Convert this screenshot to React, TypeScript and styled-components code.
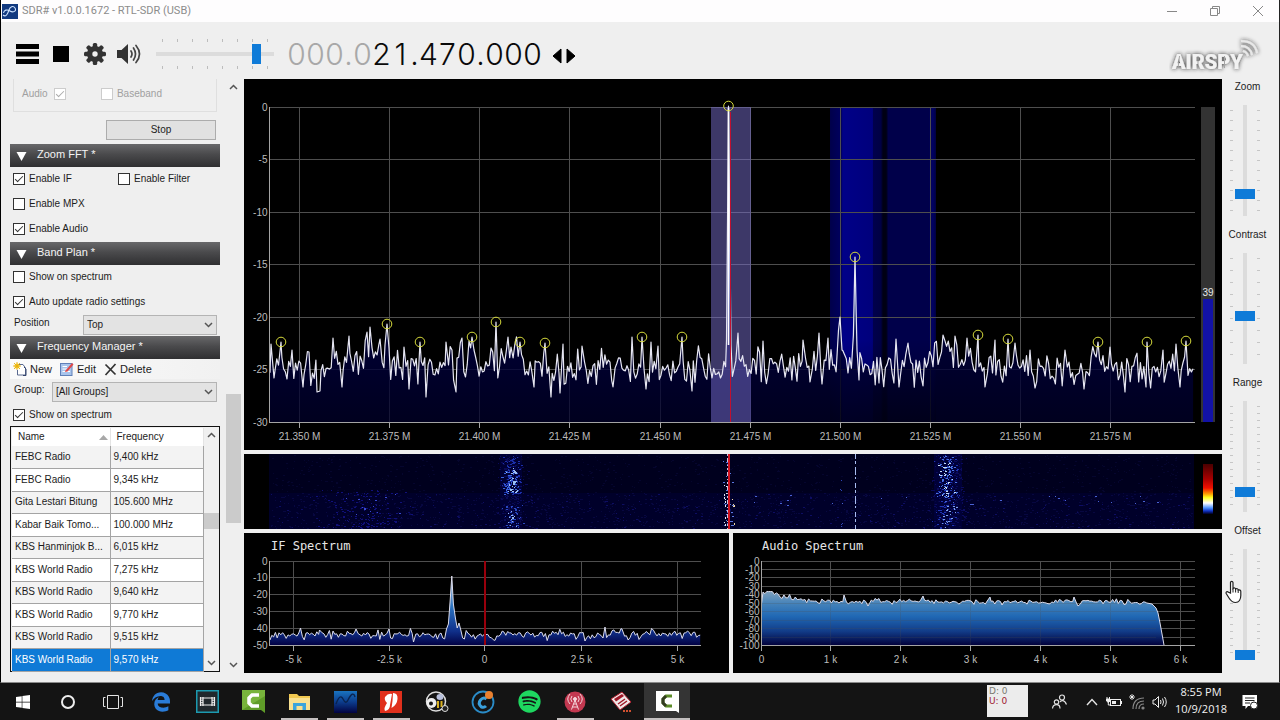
import React from 'react';
import styled, { createGlobalStyle, css } from 'styled-components';
import { FaWindows, FaSpotify, FaEdgeLegacy } from 'react-icons/fa';

const GlobalStyle = createGlobalStyle`
  *, *::before, *::after { box-sizing: border-box; }
  body {
    margin: 0;
    background: #141414;
    color: #1c1c1c;
    font: 10px/12px "Liberation Sans", Arial, sans-serif;
  }
  button, input, select { font: inherit; color: inherit; margin: 0; }
`;

/* ---------- window frame ---------- */

const Desktop = styled.div`
  min-height: 100vh;
  display: flex;
  flex-direction: column;
`;

const AppWindow = styled.main`
  flex: 1;
  display: flex;
  flex-direction: column;
  background: #efefef;
  border-left: 1px solid #000;
  border-right: 1px solid #222;
  border-bottom: 1px solid #8a8a8a;
`;

const TitleBar = styled.header`
  display: flex;
  align-items: center;
  height: 22px;
  padding-left: 1px;
  background: #fefdfe;
`;

const Title = styled.h1`
  flex: 1;
  margin: 0 0 0 4px;
  font: 400 11px/16px Roboto, "Open Sans", sans-serif;
  color: #8c8c8c;
`;

const CaptionButton = styled.button`
  display: grid;
  place-items: center;
  width: 43px;
  height: 20px;
  padding: 0;
  border: 0;
  background: transparent;
  color: #888;
`;

const Toolbar = styled.div`
  display: flex;
  align-items: center;
  height: 57px;
  padding: 6px 16px 0 9px;
`;

const ToolButton = styled.button`
  display: grid;
  place-items: center;
  width: 34px;
  height: 34px;
  padding: 0;
  border: 0;
  background: transparent;
`;

const VolumeSlider = styled.input`
  appearance: none;
  width: 118px;
  height: 30px;
  margin-left: 10px;
  background:
    linear-gradient(#dcdcdc, #dcdcdc) center 13px / 100% 4px no-repeat,
    repeating-linear-gradient(to right, #bdbdbd 0 1px, transparent 1px 15px) 6px 0 / 106px 3px no-repeat,
    repeating-linear-gradient(to right, #bdbdbd 0 1px, transparent 1px 15px) 6px 27px / 106px 3px no-repeat;
  &::-webkit-slider-thumb {
    appearance: none;
    width: 9px;
    height: 20px;
    background: #0f7bd8;
  }
`;

const Frequency = styled.div`
  display: flex;
  margin-left: 13px;
  font: 300 30px/32px Inter, "Open Sans", sans-serif;
  color: #0a0a0a;
`;

const Digit = styled.span<{ $dim?: boolean; $dot?: boolean }>`
  width: ${p => (p.$dot ? 9 : 19)}px;
  text-align: center;
  color: ${p => (p.$dim ? '#a8a8a8' : 'inherit')};
`;

const StepButtons = styled.div`
  display: flex;
  gap: 4px;
  margin-left: 10px;
  padding-top: 4px;
`;

const StepButton = styled.button`
  display: block;
  padding: 0;
  border: 0;
  background: transparent;
  svg { display: block; }
`;

const Brand = styled.svg`
  display: block;
  margin-left: auto;
`;

const Body = styled.div`
  flex: 1;
  display: flex;
  align-items: flex-start;
  padding-bottom: 9px;
`;

/* ---------- left panel ---------- */

const Sidebar = styled.aside`
  display: flex;
  flex: none;
  width: 243px;
  align-self: stretch;
  justify-content: space-between;
  padding: 0 3px 0 9px;
`;

const Panels = styled.div`
  width: 210px;
`;

const RecordGroup = styled.fieldset`
  display: flex;
  align-items: center;
  justify-content: space-between;
  height: 33px;
  margin: 0 3px;
  padding: 0 54px 3px 8px;
  border: 1px solid #dfdfdf;
  border-top: 0;
  color: #a0a0a0;
`;

const StopButton = styled.button`
  display: block;
  width: 110px;
  height: 20px;
  margin: 8px 4px 4px auto;
  padding: 0;
  border: 1px solid #acacac;
  background: #e1e1e1;
`;

const SectionButton = styled.button`
  display: flex;
  align-items: center;
  gap: 10px;
  width: 100%;
  height: 23px;
  padding: 0 6px 4px;
  border: 0;
  background: linear-gradient(#68686a, #4a4a4c 45%, #2f2f31);
  color: #f4f4f4;
  font-size: 11px;
  svg { margin-top: 5px; }
`;

const Checks = styled.div<{ $pad?: number }>`
  display: grid;
  grid-template-columns: 105px 1fr;
  row-gap: 12px;
  padding: 5px 3px ${p => p.$pad ?? 7}px;
`;

const CheckLabel = styled.label<{ $wide?: boolean; $reverse?: boolean }>`
  display: flex;
  flex-direction: ${p => (p.$reverse ? 'row-reverse' : 'row')};
  align-items: center;
  gap: ${p => (p.$reverse ? 6 : 4)}px;
  height: 13px;
  white-space: nowrap;
  ${p => p.$wide && css`grid-column: 1 / -1;`}
`;

const CheckInput = styled.input`
  appearance: none;
  display: grid;
  place-items: center;
  width: 12px;
  height: 12px;
  border: 1px solid #333;
  background: #fff;
  &:checked::after {
    content: "";
    width: 8px;
    height: 4px;
    margin-top: -2px;
    border: solid #333;
    border-width: 0 0 1px 1px;
    transform: rotate(-45deg);
  }
  &:disabled { border-color: #ccc; }
  &:disabled:checked::after { border-color: #aaa; }
`;

const FieldRow = styled.div<{ $label: number }>`
  display: grid;
  grid-template-columns: ${p => p.$label}px 1fr;
  margin-bottom: 1px;
  padding: 0 3px 0 4px;
  line-height: 16px;
`;

const SelectWrap = styled.div`
  position: relative;
  svg {
    position: absolute;
    right: 4px;
    top: 7px;
    pointer-events: none;
  }
`;

const Select = styled.select`
  appearance: none;
  display: block;
  width: 100%;
  height: 20px;
  padding: 0 3px;
  border: 1px solid #b4b4b4;
  border-radius: 0;
  background: #e3e3e3;
`;

const ManagerTools = styled.div`
  display: flex;
  align-items: center;
  gap: 8px;
  height: 20px;
  margin-bottom: 3px;
  padding-left: 3px;
  background: linear-gradient(to right, #fbfbfb, #f1f1f1);
`;

const ManagerTool = styled.button`
  display: flex;
  align-items: center;
  gap: 3px;
  padding: 0;
  border: 0;
  background: transparent;
  font-size: 11px;
`;

const StationList = styled.div`
  display: flex;
  height: 246px;
  border: 1px solid #111;
  background: #f0f0f0;
`;

const StationTable = styled.table`
  width: 192px;
  height: 243px;
  margin: 1px 0 0 1px;
  border-collapse: collapse;
  table-layout: fixed;
  background: #fff;
  th {
    height: 18px;
    padding: 0 6px;
    font-weight: 400;
    text-align: left;
    border-right: 1px solid #e4e4e4;
  }
  th svg { float: right; margin: 4px -4px 0 0; }
  td {
    height: 22px;
    padding: 0 3px;
    overflow: hidden;
    white-space: nowrap;
    text-overflow: ellipsis;
    border-right: 1px solid #a4a4a4;
    border-bottom: 1px solid #a4a4a4;
  }
  tbody tr:nth-child(even) td { height: 23px; }
  tbody tr:nth-child(odd) { background: #f3f3f3; }
`;

const StationRow = styled.tr<{ $selected: boolean }>`
  ${p => p.$selected && css`
    && { background: #0f7ad6; color: #fff; }
  `}
`;

const ScrollTrack = styled.div<{ $width: number }>`
  display: flex;
  flex-direction: column;
  width: ${p => p.$width}px;
  margin-left: auto;
`;

const ScrollArrow = styled.button`
  display: grid;
  place-items: center;
  width: 100%;
  height: 16px;
  padding: 0;
  border: 0;
  background: transparent;
  color: #555;
`;

const ScrollSpace = styled.div<{ $grow: number }>`
  flex: ${p => p.$grow} 1 0;
`;

const ScrollThumb = styled.div<{ $grow: number }>`
  flex: ${p => p.$grow} 1 0;
  background: #cbcbcb;
`;

/* ---------- displays ---------- */

const Displays = styled.section`
  flex: 1;
  min-width: 0;
  display: flex;
  flex-direction: column;
  gap: 4px;
`;

const DisplayPair = styled.div`
  display: grid;
  grid-template-columns: 485fr 489fr;
  gap: 4px;
`;

const Chart = styled.svg`
  display: block;
  width: 100%;
  height: auto;
  background: #000;
  font: 10px "Liberation Sans", Arial, sans-serif;
`;

const ChartTitle = styled.text`
  font: 12px "DejaVu Sans Mono", monospace;
  fill: #e6e6e6;
`;

/* ---------- right sliders ---------- */

const Controls = styled.section`
  flex: none;
  width: 57px;
  display: flex;
  flex-direction: column;
  gap: 11px;
`;

const Control = styled.div`
  position: relative;
  display: flex;
  flex-direction: column;
  align-items: center;
  gap: 10px;
  label { padding-right: 6px; line-height: 16px; }
`;

const VerticalSlider = styled.input<{ $step: number; $ticks: number }>`
  appearance: none;
  writing-mode: vertical-lr;
  direction: rtl;
  width: 30px;
  height: 111px;
  margin-right: 11px;
  background:
    linear-gradient(#dcdcdc, #dcdcdc) center / 4px 100% no-repeat,
    repeating-linear-gradient(to bottom, #c6c6c6 0 1px, transparent 1px ${p => p.$step}px) 0 5px / 3px ${p => p.$step * (p.$ticks - 1) + 1}px no-repeat,
    repeating-linear-gradient(to bottom, #c6c6c6 0 1px, transparent 1px ${p => p.$step}px) 100% 5px / 3px ${p => p.$step * (p.$ticks - 1) + 1}px no-repeat;
  &::-webkit-slider-thumb {
    appearance: none;
    width: 20px;
    height: 10px;
    background: #0f7bd8;
  }
`;

const Pointer = styled.svg`
  position: absolute;
  left: 3px;
  top: 57px;
`;

/* ---------- taskbar ---------- */

const Taskbar = styled.footer`
  display: flex;
  height: 37px;
  background: #141414;
  color: #f2f2f2;
`;

const TaskGroup = styled.nav`
  display: flex;
  & + & { margin-left: 3px; }
`;

const TaskButton = styled.button<{ $width?: number; $open?: boolean; $active?: boolean }>`
  display: grid;
  place-items: center;
  width: ${p => p.$width ?? 46}px;
  height: 37px;
  padding: 0;
  border: 0;
  background: ${p => (p.$active ? '#343434' : 'transparent')};
  ${p => p.$open && css`
    background-image: linear-gradient(#c4c0c0, #c4c0c0);
    background-repeat: no-repeat;
    background-position: bottom;
    background-size: ${p.$active ? '100%' : '37px'} 2px;
  `}
`;

const Tray = styled.div`
  display: flex;
  align-items: center;
  margin-left: auto;
  padding-right: 12px;
`;

const TrafficBox = styled.div`
  width: 41px;
  height: 32px;
  margin-right: 8px;
  padding: 1px 2px;
  background: #ececec;
  font: 9px/10px "DejaVu Sans", sans-serif;
  color: #7a7a70;
  align-self: flex-start;
  margin-top: 2px;
  span { display: block; }
  span + span { color: #a02030; }
`;

const TrayButton = styled.button<{ $width?: number }>`
  display: grid;
  place-items: center;
  width: ${p => p.$width ?? 23}px;
  height: 37px;
  padding: 0;
  border: 0;
  background: transparent;
`;

const Clock = styled.button`
  width: 60px;
  padding: 0 0 3px;
  border: 0;
  background: transparent;
  color: #f2f2f2;
  font: 11px/17px "Open Sans", "Noto Sans", sans-serif;
  white-space: nowrap;
  time { display: block; }
`;

/* ---------- signal data ---------- */

type Point = [number, number];

function random(seed: number) {
  let s = seed;
  return () => {
    s = (s + 0x6d2b79f5) | 0;
    let t = Math.imul(s ^ (s >>> 15), 1 | s);
    t = (t + Math.imul(t ^ (t >>> 7), 61 | t)) ^ t;
    return ((t ^ (t >>> 14)) >>> 0) / 4294967296;
  };
}

function trace(seed: number, x0: number, x1: number, step: number, mean: (x: number) => number, amp: number, keys: Point[]) {
  const r = random(seed);
  const pts: Point[] = [];
  let drift = 0;
  for (let x = x0; x <= x1; x += step) {
    drift = drift * 0.5 + (r() - 0.5) * amp * 0.5;
    pts.push([x, mean(x) + drift + (r() + r() + r() - 1.5) * amp * 0.8]);
  }
  keys.forEach(([kx, ky]) => {
    const i = Math.round((kx - x0) / step);
    if (pts[i]) pts[i] = [kx, ky];
  });
  return pts;
}

const toPath = (pts: Point[]) => 'M' + pts.map(([x, y]) => `${x.toFixed(1)} ${y.toFixed(1)}`).join('L');
const toArea = (pts: Point[], base: number) =>
  `${toPath(pts)}L${pts[pts.length - 1][0].toFixed(1)} ${base}L${pts[0][0]} ${base}Z`;

const bump = (x: number, c: number, w: number, h: number) => h * Math.exp(-(((x - c) / w) ** 2));

const PEAKS: Point[] = [
  [281, 342], [387, 324], [420, 342], [472, 337], [496, 322], [520, 342], [545, 343], [642, 337],
  [682, 337], [728.5, 106], [855, 257], [978, 335], [1008, 339], [1098, 342], [1147, 342], [1186, 341],
];

const RF_KEYS: Point[] = [
  [271, 344], [274, 378], [292, 350], [303, 387], [309, 352], [317, 392], [320, 391], [333, 338], [342, 387], [349, 336],
  [367, 332], [370, 327], [380, 339], [385, 345], [389, 348], [404, 347], [409, 389], [426, 397], [446, 342], [452, 350],
  [456, 392], [462, 338], [469, 341], [474, 350], [491, 348], [508, 337], [511, 347], [534, 387], [551, 397], [560, 393],
  [563, 344], [582, 346], [613, 387], [632, 337], [646, 389], [651, 342], [658, 346], [692, 391], [726.5, 340], [731, 345],
  [738, 333], [763, 341], [803, 340], [810, 382], [819, 333], [822, 384], [828, 338], [838.5, 330], [840, 317], [842, 350],
  [853.4, 335], [857, 350], [859, 380], [879, 383], [896, 339], [899, 387], [908, 343], [923, 386], [943, 335], [955, 336],
  [967, 338], [985, 387], [995, 340], [1015, 343], [1030, 350], [1035, 388], [1065, 350], [1084, 389], [1110, 347],
  [1125, 392], [1146, 387], [1163, 350], [1176, 344], [1180, 387],
];

const RF = trace(
  11, 270, 1194, 1.7,
  x => 369 - bump(x, 372, 22, 14) - bump(x, 513, 9, 18) - bump(x, 948, 18, 16) - bump(x, 830, 110, 5),
  20, [...RF_KEYS, ...PEAKS],
);

const IF = trace(
  5, 270, 701, 1.8, () => 635, 6,
  [[270, 640], [300.5, 628], [319.5, 630], [356, 629], [413.5, 642], [389, 629], [446.5, 629], [448.4, 624], [450.2, 600], [451.8, 576],
   [453.4, 604], [455.4, 618], [457.2, 628], [459, 623], [460.8, 630], [605, 627], [622, 629], [585, 641]],
);

const AUDIO = [
  [761.5, 604] as Point,
  ...trace(21, 763, 1148, 1.9, x => 601 + (x - 763) / 260 + bump(x, 1100, 40, -1) - bump(x, 768, 14, 9) - bump(x, 790, 14, 2), 3,
    [[844, 595], [923, 596], [990, 597], [1074, 597], [1078, 606], [868, 606], [1002, 605]]),
  [1152, 604], [1156, 608], [1158, 613], [1160, 623], [1162, 634], [1164, 645],
] as Point[];

function specks(seed: number, count: number, place: (r: () => number) => Point, len = 1) {
  const r = random(seed);
  let d = '';
  for (let i = 0; i < count; i++) {
    const [x, y] = place(r);
    d += `M${Math.round(x)} ${Math.round(y) + 0.5}h${len + Math.round(r())}`;
  }
  return d;
}

const around = (c: number, w: number, y0: number, y1: number) => (r: () => number): Point =>
  [c + (r() + r() + r() - 1.5) * w, y0 + r() * (y1 - y0)];
const within = (x0: number, x1: number, y0: number, y1: number) => (r: () => number): Point =>
  [x0 + r() * (x1 - x0), y0 + r() * (y1 - y0)];

const SPECKS: [string, string][] = [
  ['#070740', specks(1, 1500, within(270, 1192, 493, 528))],
  ['#05052e', specks(2, 900, within(270, 1192, 455, 493))],
  ['#0d0d62', specks(3, 260, within(270, 1192, 494, 528))],
  ['#10107a', specks(4, 150, around(365, 40, 490, 528))],
  ['#3a4ad0', specks(5, 16, around(365, 44, 494, 514))],
  ['#0a0a58', specks(6, 260, around(511, 13, 455, 528))],
  ['#1c2fa8', specks(7, 100, around(511, 9, 456, 494))],
  ['#3a62dc', specks(8, 60, around(511, 9, 470, 494))],
  ['#9cc0f4', specks(9, 30, around(512, 5, 468, 493))],
  ['#2a48c0', specks(10, 50, around(513, 9, 505, 528))],
  ['#90b4f0', specks(12, 12, around(513, 6, 508, 526))],
  ['#0a0a5c', specks(13, 320, around(949, 15, 455, 528))],
  ['#1f35b4', specks(14, 120, around(947, 12, 455, 528))],
  ['#4a74e4', specks(15, 70, around(946, 9, 456, 498))],
  ['#c4dcf8', specks(16, 32, around(945, 7, 460, 496))],
  ['#7ea2ec', specks(17, 20, around(948, 10, 505, 528))],
  ['#5a78e0', specks(18, 40, around(728, 5, 456, 528))],
  ['#e8e8f8', specks(19, 34, within(724, 726, 480, 528), 0)],
  ['#f2d8a0', specks(20, 18, within(732, 734, 490, 528), 0)],
  ['#4a62d4', specks(23, 26, within(750, 1180, 494, 505))],
  ['#3046b8', specks(24, 10, within(840, 842, 458, 528), 0)],
];

/* ---------- chart parts ---------- */

interface AxisProps {
  left: number;
  right: number;
  top: number;
  bottom: number;
  xs: [number, string][];
  ys: [number, string][];
}

function Grid({ left, right, top, bottom, xs, ys }: AxisProps) {
  return (
    <g shapeRendering="crispEdges" stroke="#4e4e4e">
      {ys.map(([y]) => <line key={y} x1={left} x2={right} y1={y} y2={y} />)}
      {xs.map(([x]) => <line key={x} x1={x} x2={x} y1={top} y2={bottom} />)}
    </g>
  );
}

function Axes({ left, right, top, bottom, xs, ys }: AxisProps) {
  return (
    <>
      <g shapeRendering="crispEdges" stroke="#a4a4a4">
        <path d={`M${left} ${top}V${bottom}H${right}`} fill="none" />
        {xs.map(([x]) => <line key={x} x1={x} x2={x} y1={bottom} y2={bottom + 5} />)}
      </g>
      <g fill="#bcbcbc">
        {ys.map(([y, t]) => <text key={t} x={left - 2} y={y + 3} textAnchor="end">{t}</text>)}
        {xs.map(([x, t]) => <text key={t} x={x} y={bottom + 17} textAnchor="middle">{t}</text>)}
      </g>
    </>
  );
}

const RF_AXES: AxisProps = {
  left: 269.5, right: 1195, top: 107, bottom: 422.5,
  xs: ['350', '375', '400', '425', '450', '475', '500', '525', '550', '575'].map((n, i) => [Math.round(299 + i * 90.15) + 0.5, `21.${n} M`]),
  ys: [0, 5, 10, 15, 20, 25, 30].map(n => [Math.floor(107 + n * 10.5) + 0.5, n ? `-${n}` : '0']),
};

const IF_AXES: AxisProps = {
  left: 269.5, right: 701, top: 561, bottom: 645.5,
  xs: [[293.5, '-5 k'], [389.5, '-2.5 k'], [484.5, '0'], [581.5, '2.5 k'], [677.5, '5 k']],
  ys: [0, 1, 2, 3, 4, 5].map(n => [Math.floor(561 + n * 16.9) + 0.5, n ? `-${n}0` : '0']),
};

const AUDIO_AXES: AxisProps = {
  left: 761.5, right: 1195, top: 561, bottom: 645.5,
  xs: [0, 1, 2, 3, 4, 5, 6].map(n => [Math.floor(761 + n * 69.9) + 0.5, n ? `${n} k` : '0']),
  ys: [0, 1, 2, 3, 4, 5, 6, 7, 8, 9, 10].map(n => [Math.floor(561 + n * 8.45) + 0.5, n ? `-${n}0` : '0']),
};

function RfSpectrum() {
  return (
    <Chart viewBox="244 79 978 371" role="img" aria-label="RF spectrum">
      <defs>
        <linearGradient id="rf" gradientUnits="userSpaceOnUse" x1="0" x2="0" y1="107" y2="422">
          <stop offset="0" stopColor="#b8dcff" />
          <stop offset=".45" stopColor="#4a86d8" />
          <stop offset=".76" stopColor="#00003a" stopOpacity=".85" />
          <stop offset="1" stopColor="#00002c" stopOpacity=".7" />
        </linearGradient>
        <linearGradient id="band" x1="0" x2="1" y1="0" y2="0">
          <stop offset="0" stopColor="#00004a" />
          <stop offset=".11" stopColor="#000060" />
          <stop offset=".12" stopColor="#000088" />
          <stop offset=".4" stopColor="#00007c" />
          <stop offset=".41" stopColor="#00004c" />
          <stop offset=".48" stopColor="#000044" />
          <stop offset=".5" stopColor="#000014" />
          <stop offset=".53" stopColor="#000014" />
          <stop offset=".55" stopColor="#00004a" />
          <stop offset=".93" stopColor="#00004a" />
          <stop offset=".97" stopColor="#000064" />
          <stop offset="1" stopColor="#000040" />
        </linearGradient>
        <linearGradient id="bandFade" x1="0" x2="0" y1="0" y2="1">
          <stop offset="0" stopColor="#000" stopOpacity="0" />
          <stop offset="1" stopColor="#000" stopOpacity=".5" />
        </linearGradient>
      </defs>
      <rect x="830" y="107" width="106" height="315" fill="url(#band)" />
      <Grid {...RF_AXES} />
      <path d={toArea(RF, 422)} fill="url(#rf)" />
      <rect x="830" y="340" width="106" height="82" fill="url(#bandFade)" />
      <rect x="711" y="107" width="40" height="315" fill="#7a70d0" fillOpacity=".5" />
      <path d={toPath(RF)} fill="none" stroke="#e6e6f2" strokeWidth="1.2" strokeLinejoin="round" />
      <line x1="728.5" x2="728.5" y1="108" y2="345" stroke="#fff" strokeWidth="1.6" />
      <line x1="730.5" x2="730.5" y1="112" y2="422" stroke="#c01030" strokeWidth="1" />
      <Axes {...RF_AXES} />
      {PEAKS.map(([x, y]) => <circle key={x} cx={x} cy={y} r="4.8" fill="none" stroke="#d6da3c" strokeWidth="1" />)}
      <rect x="1201" y="107" width="14" height="315" fill="#333" />
      <rect x="1203" y="299" width="10" height="123" fill="#1212a6" />
      <text x="1208" y="296" textAnchor="middle" fill="#e8e8e8">39</text>
    </Chart>
  );
}

function Waterfall() {
  return (
    <Chart viewBox="244 454 978 75" role="img" aria-label="Waterfall">
      <defs>
        <linearGradient id="heat" x1="0" x2="0" y1="0" y2="1">
          <stop offset="0" stopColor="#4a0000" />
          <stop offset=".3" stopColor="#a80000" />
          <stop offset=".48" stopColor="#f01000" />
          <stop offset=".6" stopColor="#ffa000" />
          <stop offset=".67" stopColor="#ffff20" />
          <stop offset=".78" stopColor="#fff" />
          <stop offset=".88" stopColor="#4a90ff" />
          <stop offset=".94" stopColor="#1030c0" />
          <stop offset="1" stopColor="#000020" />
        </linearGradient>
      </defs>
      <rect x="269" y="454" width="925" height="39" fill="#00001e" />
      <rect x="269" y="493" width="925" height="36" fill="#00002a" />
      <rect x="500" y="454" width="22" height="75" fill="#000034" />
      <rect x="934" y="454" width="28" height="75" fill="#000038" />
      {SPECKS.map(([color, d]) => <path key={d.slice(0, 40)} d={d} stroke={color} fill="none" />)}
      <line x1="855.5" x2="855.5" y1="454" y2="529" stroke="#a8bcf0" strokeDasharray="5 2 3 3 8 2 2 4" />
      <line x1="727.5" x2="727.5" y1="454" y2="529" stroke="#c8c4e4" strokeDasharray="2 2 4 3 1 2" />
      <rect x="728" y="454" width="2" height="75" fill="#d01420" />
      <rect x="1203" y="464" width="10" height="50" fill="url(#heat)" />
    </Chart>
  );
}

function IfSpectrum() {
  return (
    <Chart viewBox="244 533 485 140" role="img" aria-label="IF Spectrum">
      <defs>
        <linearGradient id="if" gradientUnits="userSpaceOnUse" x1="0" x2="0" y1="576" y2="645">
          <stop offset="0" stopColor="#b0c8e0" />
          <stop offset=".45" stopColor="#2a72c0" />
          <stop offset=".8" stopColor="#10308a" />
          <stop offset="1" stopColor="#020244" />
        </linearGradient>
      </defs>
      <ChartTitle x="271" y="550">IF Spectrum</ChartTitle>
      <Grid {...IF_AXES} />
      <path d={toArea(IF, 645)} fill="url(#if)" />
      <path d={toPath(IF)} fill="none" stroke="#dcdcec" />
      <line x1="485" x2="485" y1="561" y2="645" stroke="#98000c" strokeWidth="2" />
      <Axes {...IF_AXES} />
    </Chart>
  );
}

function AudioSpectrum() {
  return (
    <Chart viewBox="733 533 489 140" role="img" aria-label="Audio Spectrum">
      <defs>
        <linearGradient id="audio" gradientUnits="userSpaceOnUse" x1="0" x2="0" y1="590" y2="645">
          <stop offset="0" stopColor="#86a4bc" />
          <stop offset=".25" stopColor="#4482ba" />
          <stop offset=".48" stopColor="#2068b4" />
          <stop offset=".75" stopColor="#123c88" />
          <stop offset="1" stopColor="#02023c" />
        </linearGradient>
      </defs>
      <ChartTitle x="762" y="550">Audio Spectrum</ChartTitle>
      <Grid {...AUDIO_AXES} />
      <path d={toArea(AUDIO, 645)} fill="url(#audio)" />
      <g opacity=".22"><Grid {...AUDIO_AXES} top={602} right={1156} ys={AUDIO_AXES.ys.slice(5)} /></g>
      <path d={toPath(AUDIO)} fill="none" stroke="#dcdcec" />
      <Axes {...AUDIO_AXES} />
    </Chart>
  );
}

/* ---------- small pieces ---------- */

const Chevron = ({ up }: { up?: boolean }) => (
  <svg width="9" height="6" viewBox="0 0 9 6" fill="none" stroke="#555" strokeWidth="1.5">
    <path d={up ? 'M1 5L4.5 1.5L8 5' : 'M1 1L4.5 4.5L8 1'} />
  </svg>
);

function Check({ label, wide, ...rest }: { label: string; wide?: boolean; checked?: boolean; disabled?: boolean; reverse?: boolean }) {
  const { checked, disabled, reverse } = rest;
  return (
    <CheckLabel $wide={wide} $reverse={reverse}>
      <CheckInput type="checkbox" defaultChecked={checked} disabled={disabled} />
      {label}
    </CheckLabel>
  );
}

const Section = ({ title }: { title: string }) => (
  <SectionButton aria-expanded="true">
    <svg width="11" height="9" viewBox="0 0 11 9"><path d="M0.5 0H10.5L5.5 9Z" fill="#fff" /></svg>
    {title}
  </SectionButton>
);

function Scrollbar({ width, before, thumb, after }: { width: number; before: number; thumb: number; after: number }) {
  return (
    <ScrollTrack $width={width}>
      <ScrollArrow aria-label="Scroll up"><Chevron up /></ScrollArrow>
      <ScrollSpace $grow={before} />
      <ScrollThumb $grow={thumb} />
      <ScrollSpace $grow={after} />
      <ScrollArrow aria-label="Scroll down"><Chevron /></ScrollArrow>
    </ScrollTrack>
  );
}

const STATIONS: [string, string][] = [
  ['FEBC Radio', '9,400 kHz'],
  ['FEBC Radio', '9,345 kHz'],
  ['Gita Lestari Bitung', '105.600 MHz'],
  ['Kabar Baik Tomo...', '100.000 MHz'],
  ['KBS Hanminjok B...', '6,015 kHz'],
  ['KBS World Radio', '7,275 kHz'],
  ['KBS World Radio', '9,640 kHz'],
  ['KBS World Radio', '9,770 kHz'],
  ['KBS World Radio', '9,515 kHz'],
  ['KBS World Radio', '9,570 kHz'],
];

function LeftPanel() {
  return (
    <Sidebar>
      <Panels>
        <RecordGroup>
          <Check label="Audio" checked disabled reverse />
          <Check label="Baseband" disabled />
        </RecordGroup>
        <StopButton>Stop</StopButton>
        <Section title="Zoom FFT *" />
        <Checks>
          <Check label="Enable IF" checked />
          <Check label="Enable Filter" />
          <Check label="Enable MPX" wide />
          <Check label="Enable Audio" wide checked />
        </Checks>
        <Section title="Band Plan *" />
        <Checks>
          <Check label="Show on spectrum" wide />
          <Check label="Auto update radio settings" wide checked />
        </Checks>
        <FieldRow $label={69}>
          <label htmlFor="position">Position</label>
          <SelectWrap>
            <Select id="position"><option>Top</option></Select>
            <Chevron />
          </SelectWrap>
        </FieldRow>
        <Section title="Frequency Manager *" />
        <ManagerTools>
          <ManagerTool>
            <svg width="14" height="14" viewBox="0 0 14 14">
              <path d="M5.5 2.5H10L12.5 6V13H4.5V8" fill="#fff" stroke="#5a6a90" />
              <path d="M11 5L13 7V13.500H10" fill="none" stroke="#34446c" />
              <circle cx="4" cy="4" r="2.600" fill="#f8d030" />
              <path d="M4 0V8M0 4H8M1 1L7 7M7 1L1 7" stroke="#e8b010" strokeWidth=".9" />
            </svg>
            New
          </ManagerTool>
          <ManagerTool>
            <svg width="14" height="14" viewBox="0 0 14 14">
              <rect x=".5" y="1.500" width="11.500" height="12" fill="#a8c4ec" stroke="#6080b8" />
              <path d="M2.500 4.500H7M2.500 7H9M2.500 9.500H10" stroke="#fff" />
              <path d="M5.500 8.500L12 1L13.500 2.500L7.500 9.500L5 10Z" fill="#e04848" />
            </svg>
            Edit
          </ManagerTool>
          <ManagerTool>
            <svg width="13" height="13" viewBox="0 0 13 13">
              <path d="M1.500 1.500L11.500 11.500M11.500 1L1.500 12" stroke="#333" strokeWidth="1.700" />
            </svg>
            Delete
          </ManagerTool>
        </ManagerTools>
        <FieldRow $label={38}>
          <label htmlFor="group">Group:</label>
          <SelectWrap>
            <Select id="group"><option>[All Groups]</option></Select>
            <Chevron />
          </SelectWrap>
        </FieldRow>
        <Checks $pad={5}>
          <Check label="Show on spectrum" wide checked />
        </Checks>
        <StationList>
          <StationTable>
            <colgroup><col width="98" /><col /></colgroup>
            <thead>
              <tr>
                <th>Name<svg width="9" height="5" viewBox="0 0 9 5"><path d="M0 5L4.500 0L9 5Z" fill="#a8a8a8" /></svg></th>
                <th>Frequency</th>
              </tr>
            </thead>
            <tbody>
              {STATIONS.map(([name, freq], i) => (
                <StationRow key={freq} $selected={i === STATIONS.length - 1}>
                  <td>{name}</td>
                  <td>{freq}</td>
                </StationRow>
              ))}
            </tbody>
          </StationTable>
          <Scrollbar width={15} before={70} thumb={16} after={126} />
        </StationList>
      </Panels>
      <Scrollbar width={15} before={299} thumb={129} after={134} />
    </Sidebar>
  );
}

const SLIDERS = [
  { label: 'Zoom', value: 17, step: 10, ticks: 11 },
  { label: 'Contrast', value: 43, step: 12, ticks: 9 },
  { label: 'Range', value: 15, step: 7, ticks: 15 },
  { label: 'Offset', value: 0, step: 7, ticks: 15 },
];

function RightControls() {
  return (
    <Controls>
      {SLIDERS.map(s => (
        <Control key={s.label}>
          <label htmlFor={s.label}>{s.label}</label>
          <VerticalSlider id={s.label} type="range" defaultValue={s.value} $step={s.step} $ticks={s.ticks} />
          {s.label === 'Offset' && (
            <Pointer width="18" height="24" viewBox="0 0 18 24">
              <path
                d="M5.500 13V2.500C5.500 1 7.800 1 8 2.500V8.500C9 7.500 10.500 8 10.600 9C11.600 8.200 13.200 8.800 13.200 10C14.500 9.500 15.800 10.300 15.800 11.500V15.500C15.800 19 14 22.500 10.500 22.500C7 22.500 5.500 20.500 4 18L1.200 13.500C.600 12 2.200 11 3.500 12.200Z"
                fill="#fff" stroke="#222" strokeWidth="1.200"
              />
              <path d="M8 8.500V12.500M10.600 9V12.500M13.200 10V13" stroke="#222" />
            </Pointer>
          )}
        </Control>
      ))}
    </Controls>
  );
}

const GearIcon = () => (
  <svg width="24" height="24" viewBox="-12 -12 24 24" fill="#333">
    {[0, 45, 90, 135].map(a => (
      <rect key={a} x="-2.200" y="-11" width="4.400" height="22" rx="1.500" transform={`rotate(${a})`} />
    ))}
    <circle r="8" />
    <circle r="2.700" fill="#efefef" />
  </svg>
);

const SpeakerIcon = () => (
  <svg width="24" height="22" viewBox="0 0 24 22" fill="none" stroke="#444" strokeWidth="1.700" strokeLinecap="round">
    <path d="M0 7H4.500L11 1V21L4.500 15H0Z" fill="#333" stroke="none" />
    <path d="M14 8Q16 11 14 14M16.500 5Q20.500 11 16.500 17M19 2.500Q26 11 19 19.500" />
  </svg>
);

function Top() {
  const digits = '000.021.470.000'.split('');
  return (
    <Toolbar>
      <ToolButton aria-label="Menu">
        <svg width="24" height="20" viewBox="0 0 24 20"><path d="M1 0H24V5H1ZM1 7.500H24V12.500H1ZM1 15H24V20H1Z" /></svg>
      </ToolButton>
      <ToolButton aria-label="Stop radio">
        <svg width="16" height="16"><rect width="16" height="16" /></svg>
      </ToolButton>
      <ToolButton aria-label="Settings"><GearIcon /></ToolButton>
      <ToolButton aria-label="Mute"><SpeakerIcon /></ToolButton>
      <VolumeSlider type="range" aria-label="Volume" defaultValue={88} />
      <Frequency>
        {digits.map((d, i) => <Digit key={i} $dot={d === '.'} $dim={i < 5}>{d}</Digit>)}
      </Frequency>
      <StepButtons>
        <StepButton aria-label="Step down"><svg width="10" height="16" viewBox="0 0 10 16"><path d="M9 1V15L1 8Z" stroke="#000" strokeLinejoin="round" /></svg></StepButton>
        <StepButton aria-label="Step up"><svg width="10" height="16" viewBox="0 0 10 16"><path d="M1 1V15L9 8Z" stroke="#000" strokeLinejoin="round" /></svg></StepButton>
      </StepButtons>
      <Brand width="94" height="44" viewBox="0 0 94 44" role="img" aria-label="Airspy">
        <defs>
          <filter id="glow" x="-20%" y="-40%" width="140%" height="180%">
            <feDropShadow dx="0" dy="0" stdDeviation="2" floodColor="#222" floodOpacity="1" />
          </filter>
        </defs>
        <g filter="url(#glow)">
          <text x="3" y="37" fontFamily="Roboto, sans-serif" fontWeight="900" fontSize="20" fill="#f2f2f2">AIRSPY</text>
          <g fill="none" stroke="#e8e8e8" strokeWidth="2">
            <path d="M74 19Q78 20 79 24" />
            <path d="M72 14Q81 14 83 23" />
            <path d="M72 9Q86 9 88 21" />
          </g>
        </g>
        <path d="M10.500 24L9 36M29 24V36M55.500 24V36" stroke="#a4a4a4" strokeWidth="1" />
      </Brand>
    </Toolbar>
  );
}

const Antenna = () => (
  <svg width="22" height="22" viewBox="0 0 22 22" fill="none" stroke="#f4d4da">
    <circle cx="11" cy="11" r="10.500" fill="#c23850" stroke="none" />
    <circle cx="11" cy="8" r="1.500" fill="#f4d4da" />
    <path d="M11 9L7.500 18.500M11 9L14.500 18.500M9.500 13H12.500M8.500 16H13.500M8 11Q5.500 8 8 5M14 11Q16.500 8 14 5M6 13Q1.500 8 6 3M16 13Q20.500 8 16 3" />
  </svg>
);

const APPS: { name: string; icon: React.ReactNode; open?: boolean; active?: boolean }[] = [
  { name: 'Edge', icon: <FaEdgeLegacy size={20} color="#2a7cd8" /> },
  {
    name: 'Film editor',
    icon: (
      <svg width="23" height="23" viewBox="0 0 23 23">
        <rect x=".75" y=".75" width="21.500" height="21.500" fill="#20282c" stroke="#1c9ab0" strokeWidth="1.500" />
        <path d="M4.500 7V16M18.500 7V16M7 7V16M16 7V16M4 8H19M4 15H19" fill="none" stroke="#eee" strokeWidth="1.200" />
        <path d="M4 10.200H7M4 12.700H7M16 10.200H19M16 12.700H19" stroke="#eee" />
      </svg>
    ),
  },
  {
    name: 'Recorder',
    icon: (
      <svg width="23" height="23" viewBox="0 0 23 23">
        <path d="M0 0H23V23L19 20H0Z" fill="#5f9c28" />
        <path d="M0 0H23V6L0 20Z" fill="#78b43c" />
        <path d="M17 5H10L7 8V13L10 16H17" fill="none" stroke="#fff" strokeWidth="3.500" />
      </svg>
    ),
  },
  {
    name: 'File Explorer', open: true,
    icon: (
      <svg width="21" height="18" viewBox="0 0 21 18">
        <path d="M0 1H8L10 3H21V17H0Z" fill="#f0c850" />
        <path d="M0 5H21V17H0Z" fill="#f8e090" />
        <path d="M4 17V10H17V17H13.500V13H7.500V17Z" fill="#3aa4dc" />
      </svg>
    ),
  },
  {
    name: 'SDR#', open: true,
    icon: (
      <svg width="23" height="22" viewBox="0 0 23 22">
        <defs>
          <linearGradient id="sdr" x1="0" x2="0" y1="0" y2="1"><stop offset="0" stopColor="#1a74c0" /><stop offset=".5" stopColor="#0c3c8c" /><stop offset="1" stopColor="#020240" /></linearGradient>
        </defs>
        <rect width="23" height="22" fill="url(#sdr)" />
        <path d="M2 13Q6 2 9 8T14 9Q19 -1 21 6" fill="none" stroke="#0a2450" strokeWidth="1.400" />
      </svg>
    ),
  },
  {
    name: 'Nitro', open: true,
    icon: (
      <svg width="22" height="22" viewBox="0 0 22 22">
        <rect width="22" height="22" fill="#e0301c" />
        <path d="M5 6Q8 2 12 3L10 14Q10 19 5 20Q3.500 17 7 12Q4 9 5 6Z M13 2Q18 2 17.500 8Q17 14 11.500 17L12.500 10Z" fill="#fff" />
      </svg>
    ),
  },
  {
    name: 'Bee player',
    icon: (
      <svg width="24" height="22" viewBox="0 0 24 22">
        <circle cx="11" cy="10.500" r="9.500" fill="#151515" stroke="#ddd" strokeWidth="1.500" />
        <circle cx="6.500" cy="12" r="5" fill="#eee" />
        <circle cx="6" cy="12.500" r="2" fill="#111" />
        <path d="M13 10V17M16.500 10V16" stroke="#d8b020" strokeWidth="2" />
        <ellipse cx="15" cy="6" rx="3.500" ry="3" fill="#b8c0dc" />
        <circle cx="20" cy="17.500" r="3" fill="#222" stroke="#ddd" />
      </svg>
    ),
  },
  {
    name: 'Cleaner',
    icon: (
      <svg width="24" height="24" viewBox="0 0 24 24" fill="none">
        <circle cx="12" cy="12" r="10.500" stroke="#2a8cc8" strokeWidth="1.800" />
        <path d="M15.500 9Q12.500 6.500 9.500 10T10.500 17Q13 18 15 16" stroke="#3aa0dc" strokeWidth="3" />
        <circle cx="18" cy="5" r="4" fill="#e88030" />
      </svg>
    ),
  },
  { name: 'Spotify', icon: <FaSpotify size={23} color="#1ed760" /> },
  { name: 'Radio', open: true, icon: <Antenna /> },
  {
    name: 'News',
    icon: (
      <svg width="23" height="22" viewBox="0 0 23 22">
        <path d="M1 8L12 1L21 11L10 19Z" fill="#f0e8e8" stroke="#b02030" />
        <path d="M4 8L12 3L14 5L6 10.500Z" fill="#a01828" />
        <path d="M8 13L15 8M10 15L17 10" stroke="#a01828" strokeWidth="1.500" />
        <path d="M13 20H22" stroke="#d05030" strokeWidth="2" strokeDasharray="2 1" />
      </svg>
    ),
  },
  {
    name: 'Camtasia', open: true, active: true,
    icon: (
      <svg width="23" height="22" viewBox="0 0 23 22">
        <path d="M0 0H23V22L20 20H0Z" fill="#fff" />
        <path d="M16 5H10L7 8V12L10 15H16" fill="none" stroke="#5c8c28" strokeWidth="3" />
        <path d="M10 5L7 8V12L10 15" fill="none" stroke="#333c20" strokeWidth="3" />
      </svg>
    ),
  },
];

function Bar() {
  return (
    <Taskbar>
      <TaskGroup aria-label="System">
        <TaskButton $width={45} aria-label="Start"><FaWindows size={16} color="#fff" /></TaskButton>
        <TaskButton $width={45} aria-label="Cortana">
          <svg width="16" height="16"><circle cx="8" cy="8" r="6" fill="none" stroke="#eee" strokeWidth="2" /></svg>
        </TaskButton>
        <TaskButton $width={45} aria-label="Task view">
          <svg width="20" height="14" fill="none" stroke="#e4e4e4"><path d="M4.500 .500H15.500V13.500H4.500ZM2.500 2.500H.500V11.500H2.500M17.500 2.500H19.500V11.500H17.500" /></svg>
        </TaskButton>
      </TaskGroup>
      <TaskGroup aria-label="Applications">
        {APPS.map(a => (
          <TaskButton key={a.name} $open={a.open} $active={a.active} aria-label={a.name}>{a.icon}</TaskButton>
        ))}
      </TaskGroup>
      <Tray>
        <TrafficBox><span>D: 0</span><span>U: 0</span></TrafficBox>
        <TrayButton $width={46} aria-label="People">
          <svg width="15" height="15" viewBox="0 0 15 15" fill="none" stroke="#e4e4e4" strokeWidth="1.200">
            <circle cx="10" cy="3.500" r="2.500" /><circle cx="4.500" cy="8" r="2.200" />
            <path d="M.500 14.500Q1 10.700 4.500 10.700T8 14.500M8 8Q9 6.300 11 6.600T14.500 10.500" />
          </svg>
        </TrayButton>
        <TrayButton $width={20} aria-label="Show hidden icons">
          <svg width="12" height="8" fill="none" stroke="#e4e4e4" strokeWidth="1.400"><path d="M1 7L6 1.500L11 7" /></svg>
        </TrayButton>
        <TrayButton aria-label="Battery">
          <svg width="16" height="12" viewBox="0 0 16 12" fill="none" stroke="#eee">
            <rect x="4.500" y="3.500" width="10" height="6" /><rect x="6" y="5" width="4" height="3" fill="#eee" stroke="none" /><path d="M15.500 5V8M1 1V3M3.500 1V3" /><path d="M.500 3H4V5L2.300 6.500L.500 5Z" fill="#eee" /><path d="M2.300 6V9H5" />
          </svg>
        </TrayButton>
        <TrayButton aria-label="Network">
          <svg width="16" height="16" viewBox="0 0 16 16" fill="none" stroke="#888" strokeWidth="1.200">
            <path d="M4 15Q4 4 15 4M7 15Q7 7 15 7M10 15Q10 10 15 10" /><circle cx="14" cy="14" r="1" fill="#888" />
            <path d="M3 0V6M0 3H6M1 1L5 5M5 1L1 5" stroke="#fff" strokeWidth=".800" />
          </svg>
        </TrayButton>
        <TrayButton aria-label="Volume level">
          <svg width="16" height="14" viewBox="0 0 16 14" fill="none" stroke="#eee">
            <path d="M1 5H3L6.500 1.500V12.500L3 9H1Z" /><path d="M8.500 5Q9.500 7 8.500 9M10.500 3.500Q12.500 7 10.500 10.500M12.500 2Q16 7 12.500 12" />
          </svg>
        </TrayButton>
        <Clock>
          <time>8:55 PM</time>
          <time>10/9/2018</time>
        </Clock>
        <TrayButton $width={37} aria-label="Notifications">
          <svg width="16" height="16" viewBox="0 0 16 16">
            <path d="M.500 1H15V12H6L3.500 15V12H.500Z" fill="#fff" />
            <path d="M3 4H12.500M3 6.500H12.500M3 9H8" stroke="#222" />
            <circle cx="12" cy="11.500" r="3.500" fill="#fff" stroke="#222" />
          </svg>
        </TrayButton>
      </Tray>
    </Taskbar>
  );
}

export default function App() {
  return (
    <Desktop>
      <GlobalStyle />
      <AppWindow>
        <TitleBar>
          <svg width="16" height="15" viewBox="0 0 16 15">
            <rect width="16" height="15" fill="#123a80" />
            <path d="M1 11C4 14 6 9 7 6S11 1 13 4S11 9 8 7S2 6 1.500 9" fill="none" stroke="#cfe4ff" strokeWidth="1.100" />
          </svg>
          <Title>SDR# v1.0.0.1672 - RTL-SDR (USB)</Title>
          <CaptionButton aria-label="Minimize"><svg width="10" height="10" stroke="currentColor"><path d="M0 5.500H10" /></svg></CaptionButton>
          <CaptionButton aria-label="Restore"><svg width="10" height="10" fill="none" stroke="currentColor"><path d="M.500 2.500H7.500V9.500H.500ZM2.500 2.500V.500H9.500V7.500H7.500" /></svg></CaptionButton>
          <CaptionButton aria-label="Close"><svg width="10" height="10" stroke="currentColor"><path d="M0 0L10 10M10 0L0 10" /></svg></CaptionButton>
        </TitleBar>
        <Top />
        <Body>
          <LeftPanel />
          <Displays>
            <RfSpectrum />
            <Waterfall />
            <DisplayPair>
              <IfSpectrum />
              <AudioSpectrum />
            </DisplayPair>
          </Displays>
          <RightControls />
        </Body>
      </AppWindow>
      <Bar />
    </Desktop>
  );
}
